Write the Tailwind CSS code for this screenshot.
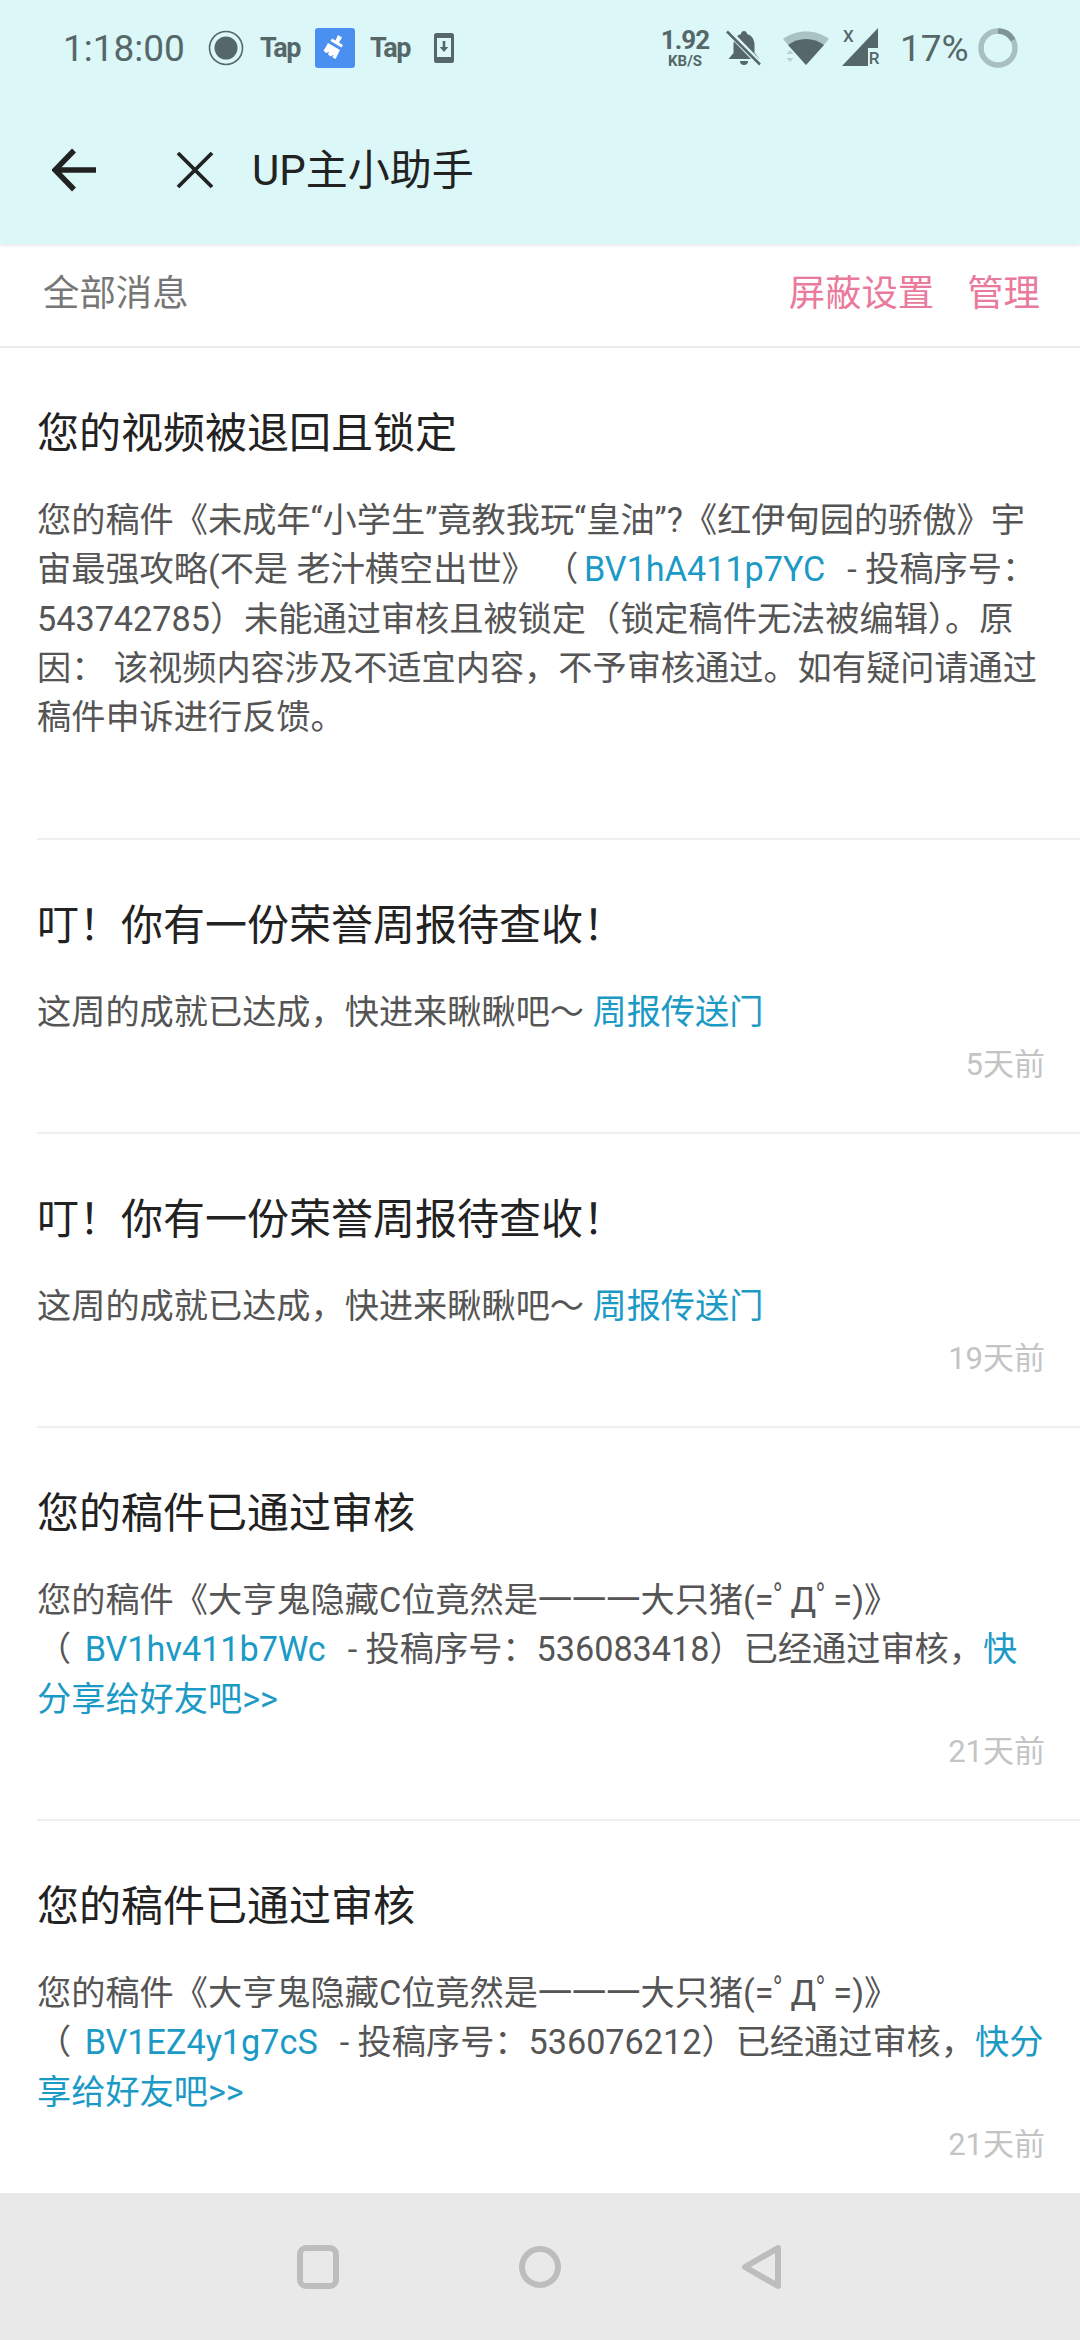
<!DOCTYPE html>
<html lang="zh">
<head>
<meta charset="utf-8">
<script src="https://cdn.jsdelivr.net/npm/@tailwindcss/browser@4"></script>
</head>
<body class="m-0 bg-white">
<div class="w-[1080px] h-[2340px] overflow-hidden flex flex-col bg-white font-['Roboto','Noto_Sans_CJK_SC',sans-serif]">
  <!-- header -->
  <header class="h-[244px] shrink-0 bg-[#dbf7f8] shadow-[0_1px_4px_rgba(0,0,0,0.12)] relative z-10 flex flex-col">
    <div class="h-[96px] flex items-center justify-between pl-[63px] pr-[62px] text-[#566769]">
      <div class="flex items-center">
        <span class="text-[37px] leading-none w-[145px]">1:18:00</span>
        <svg class="w-[36px] h-[36px]" viewBox="0 0 36 36"><circle cx="18" cy="18" r="16.5" fill="none" stroke="#566769" stroke-width="1.6"/><circle cx="18" cy="18" r="11.5" fill="#566769"/></svg>
        <span class="ml-[16px] w-[40px] text-[27px] leading-none font-bold tracking-[-1.5px]">Tap</span>
        <span class="ml-[15px] w-[40px] h-[40px] rounded-[3px] bg-[#4a90f0] flex items-center justify-center">
          <svg class="w-[30px] h-[30px]" viewBox="0 0 30 30" fill="#fff"><path d="M18 2l4 2.500-3 5 4 2.500-1.500 2.500-11-6.500 1.500-2.500 3.500 2z"/><path d="M8 10l12 7-2 4-2.500 5-3-1.500 1-3-2.500 2-3-2 1-2.500-3 1-2.500-2.500 2-3z"/></svg>
        </span>
        <span class="ml-[15px] w-[40px] text-[27px] leading-none font-bold tracking-[-1.500px]">Tap</span>
        <svg class="ml-[24px] w-[20px] h-[30px]" viewBox="0 0 20 30"><rect width="20" height="30" rx="2.500" fill="#566769"/><rect x="3" y="5" width="14" height="19" fill="#dbf7f8"/><path d="M8.700 8h2.600v6h3l-4.300 5-4.300-5h3z" fill="#566769"/></svg>
      </div>
      <div class="flex items-center">
        <div class="w-[50px] flex flex-col items-center font-bold mr-[16px] mt-[2px]">
          <span class="text-[26px] leading-[22px] tracking-[-1px]">1.92</span>
          <span class="text-[15px] leading-[16px] mt-[2px]">KB/S</span>
        </div>
        <svg class="w-[36px] h-[36px]" viewBox="0 0 36 36"><path d="M18 1c2 0 3 1.500 3 3 5 1.500 7.500 5.500 7.500 11v8l5 6H2.500l5-6v-8c0-5.500 2.500-9.500 7.500-11 0-1.500 1-3 3-3z" fill="#566769"/><path d="M14 31h8a4 4 0 0 1-8 0z" fill="#566769"/><path d="M2 1l32 33" stroke="#dbf7f8" stroke-width="6"/><path d="M1 1.500l33 33" stroke="#566769" stroke-width="2.500"/></svg>
        <svg class="ml-[20px] w-[48px] h-[36px]" viewBox="0 0 48 36"><path d="M1 9C14-1 34-1 47 9L24 35z" fill="#a9c2c4"/><path d="M6 15C16 7 32 7 42 15L24 35z" fill="#566769"/><path d="M4.500 24l3.500-4 3.500 4zM4.500 28l3.500 4 3.500-4z" fill="#b9d0d2"/></svg>
        <div class="relative ml-[12px] w-[38px] h-[40px]">
          <svg class="w-[38px] h-[40px]" viewBox="0 0 38 40"><path d="M36 0v38H0z" fill="#566769"/></svg>
          <span class="absolute left-0 -top-[1px] text-[17px] leading-[18px] font-medium bg-[#dbf7f8] px-[1px]">X</span>
          <span class="absolute right-0 bottom-0 h-[20px] w-[12px] bg-[#dbf7f8] text-[17px] leading-[20px] font-medium text-center">R</span>
        </div>
        <span class="ml-[20px] text-[37px] leading-none w-[66px] whitespace-nowrap">17%</span>
        <svg class="ml-[12px] w-[40px] h-[40px]" viewBox="0 0 40 40"><circle cx="20" cy="20" r="17" fill="none" stroke="#a9bfc0" stroke-width="5.500"/><path d="M20 3a17 17 0 0 1 15 9" fill="none" stroke="#7f9496" stroke-width="5.500"/></svg>
      </div>
    </div>
    <div class="flex-1 flex items-start">
      <svg class="ml-[52px] mt-[52px] w-[44px] h-[44px]" viewBox="0 0 44 44" fill="none" stroke="#222" stroke-width="5.500"><path d="M44 22H4M22 2.500L3 22l19 19.500"/></svg>
      <svg class="ml-[80px] mt-[55px] w-[38px] h-[38px]" viewBox="0 0 38 38" fill="none" stroke="#222" stroke-width="3.800"><path d="M2 2l34 34M36 2L2 36"/></svg>
      <h1 class="ml-[38px] mt-[50px] text-[42px] leading-[50px] font-normal text-[#222] whitespace-nowrap">UP主小助手</h1>
    </div>
  </header>

  <!-- filter bar -->
  <div class="h-[104px] shrink-0 border-b-2 border-[#ececec] flex items-center pl-[43px] pr-[40px] justify-between text-[36.4px] pb-[1px]">
    <span class="text-[#777]">全部消息</span>
    <div class="flex gap-[33px] text-[#ea7a9c]"><span>屏蔽设置</span><span>管理</span></div>
  </div>

  <!-- list -->
  <main class="flex-1 min-h-0 overflow-hidden pl-[37px]">
    <article class="h-[492px] pt-[61px] pr-0 border-b-2 border-[#efefef]">
      <h2 class="text-[42px] leading-[50px] font-normal text-[#222] whitespace-nowrap">您的视频被退回且锁定</h2>
      <p class="mt-[37px] text-[34.2px] leading-[49.300px] text-[#555] whitespace-nowrap">您的稿件《未成年“小学生”竟教我玩“皇油”?《红伊甸园的骄傲》宇<br>宙最强攻略(不是 老汁横空出世》 （ <span class="text-[#1c9ac6] -ml-[3px] pr-[5px]">BV1hA411p7YC</span> &nbsp;- 投稿序号：<br>543742785）未能通过审核且被锁定（锁定稿件无法被编辑）。原<br>因： 该视频内容涉及不适宜内容，不予审核通过。如有疑问请通过<br>稿件申诉进行反馈。</p>
    </article>
    <article class="h-[294px] pt-[61px] border-b-2 border-[#efefef]">
      <h2 class="text-[42px] leading-[50px] font-normal text-[#222] whitespace-nowrap">叮！你有一份荣誉周报待查收！</h2>
      <p class="mt-[37px] text-[34.2px] leading-[49.300px] text-[#555] whitespace-nowrap">这周的成就已达成，快进来瞅瞅吧～ <span class="text-[#1c9ac6]">周报传送门</span></p>
      <div class="mt-[8px] pr-[35px] text-right text-[31px] leading-[40px] text-[#c4c4c4]">5天前</div>
    </article>
    <article class="h-[294px] pt-[61px] border-b-2 border-[#efefef]">
      <h2 class="text-[42px] leading-[50px] font-normal text-[#222] whitespace-nowrap">叮！你有一份荣誉周报待查收！</h2>
      <p class="mt-[37px] text-[34.2px] leading-[49.300px] text-[#555] whitespace-nowrap">这周的成就已达成，快进来瞅瞅吧～ <span class="text-[#1c9ac6]">周报传送门</span></p>
      <div class="mt-[8px] pr-[35px] text-right text-[31px] leading-[40px] text-[#c4c4c4]">19天前</div>
    </article>
    <article class="h-[393px] pt-[61px] border-b-2 border-[#efefef]">
      <h2 class="text-[42px] leading-[50px] font-normal text-[#222] whitespace-nowrap">您的稿件已通过审核</h2>
      <p class="mt-[37px] text-[34.2px] leading-[49.300px] text-[#555] whitespace-nowrap">您的稿件《大亨鬼隐藏C位竟然是一一一大只猪(=ﾟДﾟ=)》<br>（ <span class="text-[#1c9ac6] px-[5px]">BV1hv411b7Wc</span> &nbsp;- 投稿序号：536083418）已经通过审核，<span class="text-[#1c9ac6]">快<br>分享给好友吧&gt;&gt;</span></p>
      <div class="mt-[8px] pr-[35px] text-right text-[31px] leading-[40px] text-[#c4c4c4]">21天前</div>
    </article>
    <article class="h-[392px] pt-[61px]">
      <h2 class="text-[42px] leading-[50px] font-normal text-[#222] whitespace-nowrap">您的稿件已通过审核</h2>
      <p class="mt-[37px] text-[34.2px] leading-[49.300px] text-[#555] whitespace-nowrap">您的稿件《大亨鬼隐藏C位竟然是一一一大只猪(=ﾟДﾟ=)》<br>（ <span class="text-[#1c9ac6] px-[5px]">BV1EZ4y1g7cS</span> &nbsp;- 投稿序号：536076212）已经通过审核，<span class="text-[#1c9ac6]">快分<br>享给好友吧&gt;&gt;</span></p>
      <div class="mt-[8px] pr-[35px] text-right text-[31px] leading-[40px] text-[#c4c4c4]">21天前</div>
    </article>
  </main>

  <!-- nav bar -->
  <nav class="h-[147px] shrink-0 bg-[#e9e9e9] flex items-start pt-[52px]">
    <svg class="ml-[297px] w-[42px] h-[44px]" viewBox="0 0 42 44" fill="none" stroke="#bdbdbd" stroke-width="6"><rect x="3" y="3" width="36" height="38" rx="6"/></svg>
    <svg class="ml-[180px] w-[42px] h-[44px]" viewBox="0 0 42 44" fill="none" stroke="#bdbdbd" stroke-width="6"><circle cx="21" cy="22" r="18"/></svg>
    <svg class="ml-[180px] w-[42px] h-[44px]" viewBox="0 0 42 44" fill="none" stroke="#bdbdbd" stroke-width="6" stroke-linejoin="round"><path d="M37 3v38L4 22z"/></svg>
  </nav>
</div>
</body>
</html>
